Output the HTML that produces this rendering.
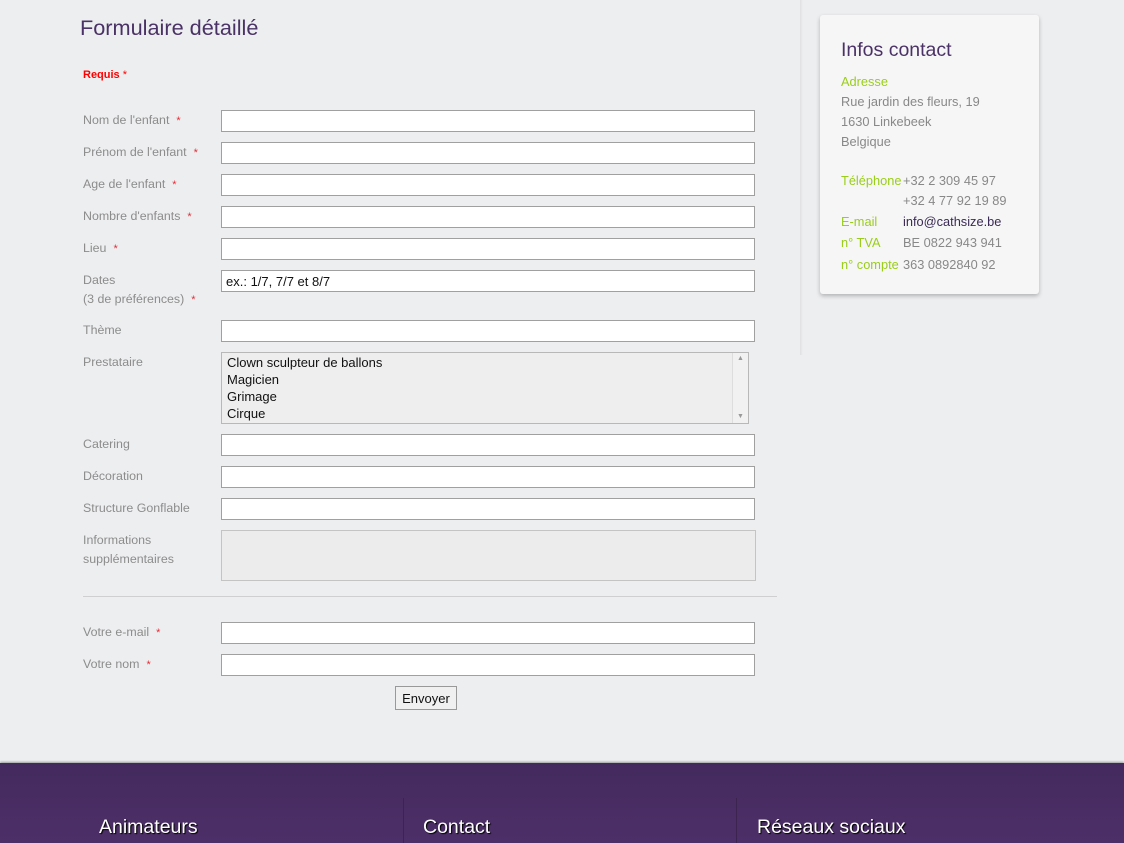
<!DOCTYPE html>
<html><head><meta charset="utf-8"><style>
*{margin:0;padding:0;box-sizing:border-box}
body{width:1124px;height:843px;overflow:hidden;background:#edeef0;font-family:"Liberation Sans",sans-serif;position:relative}
.a{position:absolute}
h1{position:absolute;left:80px;top:15px;font-size:21.7px;font-weight:normal;color:#4b3266}
.lbl{position:absolute;left:83px;font-size:12.4px;color:#8c8c8c;line-height:19px;margin-top:1px}
.lbl i{font-style:normal;color:#e0303a;font-size:11px;margin-left:7px}
.in{position:absolute;left:221px;width:534px;height:22px;background:#fff;border:1px solid #a0a0a0;font-size:13px;padding:3px 4px 1px;color:#111}
.side{position:absolute;left:820px;top:15px;width:219px;height:279px;background:#f6f6f7;border-radius:3px;box-shadow:0 2px 4px rgba(0,0,0,.25)}
.side h2{position:absolute;left:21px;top:24px;font-size:19.5px;font-weight:normal;color:#4b3266}
.g{color:#9acd1a}.s{color:#888}
.side div{position:absolute;font-size:12.8px;line-height:20px;margin-top:1px}
.foot{position:absolute;left:0;top:763px;width:1124px;height:80px;background:linear-gradient(#432a5d,#4d2f68);box-shadow:0 -1px 2px rgba(0,0,0,.35)}
.foot span{position:absolute;top:53px;color:#fff;font-size:19.5px;text-shadow:1px 1px 1px #000}
.vd{position:absolute;top:35px;width:1px;height:45px;background:#3b2450}
</style></head><body>
<h1>Formulaire détaillé</h1>
<div class="a" style="left:83px;top:69px;font-size:11px;font-weight:bold;color:#f00">Requis <span style="font-weight:normal">*</span></div>

<div class="lbl" style="top:110px">Nom de l'enfant<i>*</i></div><div class="in" style="top:110px"></div>
<div class="lbl" style="top:142px">Prénom de l'enfant<i>*</i></div><div class="in" style="top:142px"></div>
<div class="lbl" style="top:174px">Age de l'enfant<i>*</i></div><div class="in" style="top:174px"></div>
<div class="lbl" style="top:206px">Nombre d'enfants<i>*</i></div><div class="in" style="top:206px"></div>
<div class="lbl" style="top:238px">Lieu<i>*</i></div><div class="in" style="top:238px"></div>
<div class="lbl" style="top:270px">Dates<br>(3 de préférences)<i>*</i></div><div class="in" style="top:270px">ex.: 1/7, 7/7 et 8/7</div>
<div class="lbl" style="top:320px">Thème</div><div class="in" style="top:320px"></div>
<div class="lbl" style="top:352px">Prestataire</div>
<div class="a" style="left:221px;top:352px;width:528px;height:72px;background:#eeeeef;border:1px solid #b8b8b8;font-size:13px;line-height:17px;padding:1px 5px;color:#111">Clown sculpteur de ballons<br>Magicien<br>Grimage<br>Cirque
<div class="a" style="right:0;top:0;width:16px;height:70px;background:#f1f1f1;border-left:1px solid #ddd;font-size:7px;color:#999;text-align:center;line-height:12px">▲<div style="position:absolute;bottom:0;width:15px">▼</div></div></div>
<div class="lbl" style="top:434px">Catering</div><div class="in" style="top:434px"></div>
<div class="lbl" style="top:466px">Décoration</div><div class="in" style="top:466px"></div>
<div class="lbl" style="top:498px">Structure Gonflable</div><div class="in" style="top:498px"></div>
<div class="lbl" style="top:530px">Informations<br>supplémentaires</div>
<div class="a" style="left:221px;top:530px;width:535px;height:51px;background:#ececed;border:1px solid #c4c4c4"></div>
<div class="a" style="left:83px;top:596px;width:694px;height:1px;background:#cfcfd1"></div>
<div class="lbl" style="top:622px">Votre e-mail<i>*</i></div><div class="in" style="top:622px"></div>
<div class="lbl" style="top:654px">Votre nom<i>*</i></div><div class="in" style="top:654px"></div>
<div class="a" style="left:395px;top:686px;width:62px;height:24px;background:#f0f0f0;border:1px solid #999;font-size:13px;text-align:center;line-height:23px;color:#111">Envoyer</div>

<div class="a" style="left:800px;top:0;width:3px;height:355px;background:linear-gradient(90deg,#e0e0e2,#edeef0)"></div>
<div class="side">
<h2>Infos contact</h2>
<div class="g" style="left:21px;top:56px">Adresse</div>
<div class="s" style="left:21px;top:76px">Rue jardin des fleurs, 19<br>1630 Linkebeek<br>Belgique</div>
<div class="g" style="left:21px;top:155px">Téléphone</div>
<div class="s" style="left:83px;top:155px">+32 2 309 45 97<br>+32 4 77 92 19 89</div>
<div class="g" style="left:21px;top:196px">E-mail</div><div style="left:83px;top:196px;color:#3b2a55">info@cathsize.be</div>
<div class="g" style="left:21px;top:217px">n° TVA</div><div class="s" style="left:83px;top:217px">BE 0822 943 941</div>
<div class="g" style="left:21px;top:239px">n° compte</div><div class="s" style="left:83px;top:239px">363 0892840 92</div>
</div>

<div class="foot">
<div class="vd" style="left:403px"></div><div class="vd" style="left:736px"></div>
<span style="left:99px">Animateurs</span><span style="left:423px">Contact</span><span style="left:757px">Réseaux sociaux</span>
</div>
</body></html>
